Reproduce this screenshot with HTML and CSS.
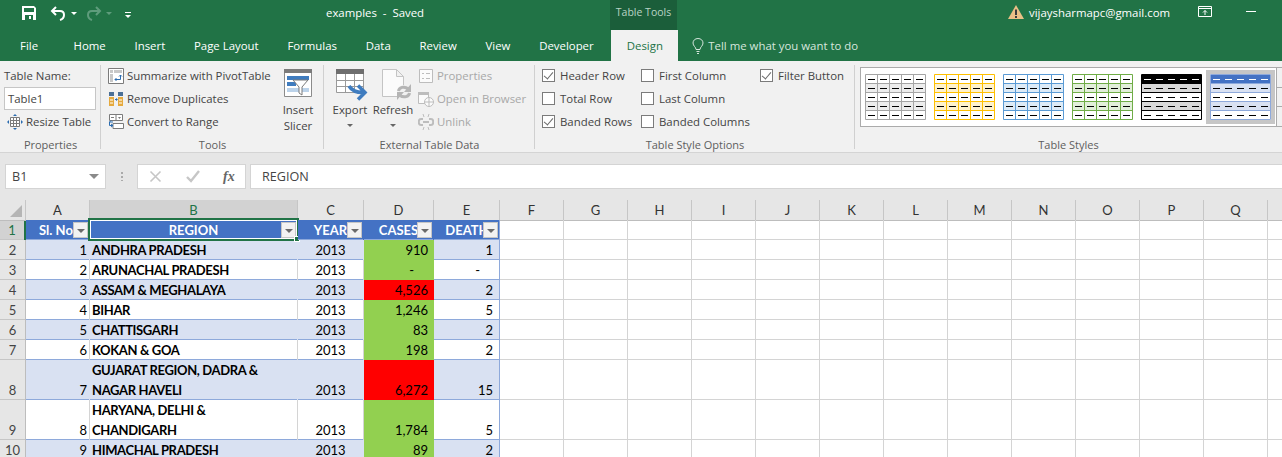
FILE: index.html
```html
<!DOCTYPE html>
<html lang="en">

<head>
    <meta charset="UTF-8">
    <title>examples - Saved</title>
    <link rel="stylesheet" href="styles.css">
</head>

<body>

    <!-- Shared table style preview -->
    <svg class="defs" width="0" height="0">
        <symbol id="thumb" viewBox="0 0 61 46">
            <rect class="t-bg" x="0" y="0" width="61" height="46" />
            <rect class="t-head" x="1" y="1" width="59" height="9" />
            <rect class="t-band" x="1" y="10" width="59" height="9" />
            <rect class="t-band" x="1" y="28" width="59" height="9" />
            <path class="t-vline" d="M12.5 1V45M24.5 1V45M36.5 1V45M48.5 1V45" />
            <path class="t-line" d="M.5 .5H60.5V45.5H.5ZM1 9.5H60M1 18.5H60M1 27.5H60M1 36.5H60" />
            <path class="t-headdash" d="M3 5.500H10M15 5.500H22M27 5.500H34M39 5.500H46M51 5.500H58" />
            <path class="t-dash" d="M3 14.500H10M15 14.500H22M27 14.500H34M39 14.500H46M51 14.500H58M3 23.500H10M15 23.500H22M27 23.500H34M39 23.500H46M51 23.500H58M3 32.500H10M15 32.500H22M27 32.500H34M39 32.500H46M51 32.500H58M3 41.500H10M15 41.500H22M27 41.500H34M39 41.500H46M51 41.500H58" />
        </symbol>
    </svg>

    <!-- Title Bar -->
    <header class="titlebar">
        <div class="qat">
            <svg class="qat-save" width="16" height="16" viewBox="0 0 16 16"><path fill="#fff" fill-rule="evenodd" d="M1 1H13L15 3V15H1ZM3 3V7H13V3ZM4 10V15H12V10ZM8 11H10V14H8Z" /></svg>
            <svg class="qat-undo" width="16" height="16" viewBox="0 0 16 16"><path fill="none" stroke="#fff" stroke-width="2" d="M6 2L2 6L6 10M2 6H10C13 6 14 8 14 10C14 12 13 14 10 15" /></svg>
            <span class="caret caret-white"></span>
            <svg class="qat-redo" width="16" height="16" viewBox="0 0 16 16"><path fill="none" stroke="#5f9c7c" stroke-width="2" d="M10 2L14 6L10 10M14 6H6C3 6 2 8 2 10C2 12 3 14 6 15" /></svg>
            <span class="caret caret-dim"></span>
            <span class="qat-more"></span>
        </div>
        <div class="doc-title">examples&nbsp; -&nbsp; Saved</div>
        <div class="tools-tab">Table Tools</div>
        <div class="account">
            <svg width="16" height="14" viewBox="0 0 16 14"><path fill="#eac086" d="M8 0L16 14H0Z" /><path fill="#3c3c3c" d="M7 4.500H9V10H7ZM7 11H9V13H7Z" /></svg>
            <span>vijaysharmapc@gmail.com</span>
        </div>
        <svg class="win-restore" width="14" height="11" viewBox="0 0 14 11"><path fill="none" stroke="#fff" d="M.5 .5H13.500V10.500H.5ZM.5 2.500H13.500M7 9V4.500M5 6.500L7 4.500L9 6.500" /></svg>
        <span class="win-min"></span>
    </header>

    <!-- Ribbon Tabs -->
    <nav class="tabs">
        <span class="tab tab-file">File</span>
        <span class="tab">Home</span>
        <span class="tab">Insert</span>
        <span class="tab">Page Layout</span>
        <span class="tab">Formulas</span>
        <span class="tab">Data</span>
        <span class="tab">Review</span>
        <span class="tab">View</span>
        <span class="tab">Developer</span>
        <span class="tab tab-active">Design</span>
        <span class="tell-me">
            <svg width="12" height="16" viewBox="0 0 12 16"><path fill="none" stroke="#d6e6dd" d="M4 11.500C4 9 1 8 1 5C1 2.500 3 .5 6 .5C9 .5 11 2.500 11 5C11 8 8 9 8 11.500ZM4.500 13.500H7.500M5 15.500H7" /></svg>
            Tell me what you want to do
        </span>
    </nav>

    <!-- Ribbon -->
    <section class="ribbon">

        <div class="group group-props">
            <div class="group-body props-body">
                <div class="props-label">Table Name:</div>
                <div class="name-input">Table1</div>
                <div class="cmd resize-cmd">
                    <svg width="16" height="16" viewBox="0 0 16 16"><path fill="#fff" stroke="#7b7b7b" d="M3.500 3.500H12.500V12.500H3.500Z" /><path fill="none" stroke="#7b7b7b" d="M6.500 4V12M9.500 4V12M4 6.500H12M4 9.500H12" /><path fill="#2b6cb0" d="M8 0L10 2H6ZM8 16L6 14H10ZM0 8L2 6V10ZM16 8L14 10V6Z" /></svg>
                    <span>Resize Table</span>
                </div>
            </div>
            <div class="group-label">Properties</div>
        </div>

        <div class="group group-tools">
            <div class="group-body tools-body">
                <div class="cmd-list">
                    <div class="cmd">
                        <svg width="16" height="16" viewBox="0 0 16 16"><path fill="#fff" stroke="#7b7b7b" d="M.5 .5H15.500V15.500H.5Z" /><path fill="#c8c8c8" d="M2 2H5V5H2ZM6 2H14V5H6ZM2 6H5V14H2Z" /><path fill="none" stroke="#2b6cb0" d="M12.500 7V11.500H7M11 8.500L12.500 7L14 8.500M8.500 10L7 11.500L8.500 13" /></svg>
                        <span>Summarize with PivotTable</span>
                    </div>
                    <div class="cmd">
                        <svg width="16" height="16" viewBox="0 0 16 16"><path fill="#4a6f96" d="M1 1H6V5H1ZM10 1H15V5H10Z" /><path fill="#e5a93d" d="M1 6H6V15H1ZM10 6H15V15H10Z" /><path fill="none" stroke="#fff" d="M2 9H5M2 12H5M11 9H14M11 12H14" /><path fill="#2b6cb0" d="M7 8H8V7L10 8.500L8 10V9H7Z" /></svg>
                        <span>Remove Duplicates</span>
                    </div>
                    <div class="cmd">
                        <svg width="16" height="16" viewBox="0 0 16 16"><path fill="#fff" stroke="#7b7b7b" d="M1.500 .5H14.500V6.500H1.500ZM8 1V6M5 9.500H15.500V14.500H5Z" /><path fill="#7b7b7b" d="M3 3H6V4H3ZM10 3H13L11.500 5Z" /><path fill="none" stroke="#2b6cb0" d="M5 8H1.500V11.500H5M3 6.500L1.500 8M3 10L5 11.500L3 13" /></svg>
                        <span>Convert to Range</span>
                    </div>
                </div>
                <div class="big-cmd slicer-cmd">
                    <svg width="28" height="28" viewBox="0 0 28 28"><path fill="#fff" stroke="#8b8b8b" d="M.5 .5H27.500V27.500H.5Z" /><path fill="#7b7b7b" d="M0 0H28V4H0Z" /><path fill="#3f7cbf" d="M3 7H25V11H3ZM3 13H12V17H3Z" /><path fill="#bcd3ea" d="M3 19H25V23H3Z" /><path fill="#fff" stroke="#7b7b7b" d="M9 11H24L18 18V26L15 24V18Z" /></svg>
                    <span>Insert</span>
                    <span>Slicer</span>
                </div>
            </div>
            <div class="group-label">Tools</div>
        </div>

        <div class="group group-external">
            <div class="group-body external-body">
                <div class="big-cmd export-cmd">
                    <svg width="32" height="32" viewBox="0 0 32 32"><path fill="#fff" stroke="#9a9a9a" d="M.5 .5H27.500V23.500H.5Z" /><path fill="#6e6e6e" d="M0 0H28V5H0Z" /><path fill="none" stroke="#9a9a9a" d="M9.500 5V24M18.500 5V24M1 11.500H27M1 17.500H27" /><path fill="none" stroke="#3f7cbf" stroke-width="3.500" d="M13 17C16 22 20 23.500 27 23.500M22 16.500L29 23.500L22 30.500" /></svg>
                    <span>Export</span>
                    <span class="caret"></span>
                </div>
                <div class="big-cmd refresh-cmd">
                    <svg width="32" height="32" viewBox="0 0 32 32"><path fill="#fbfbfb" stroke="#c4c4c4" d="M.5 .5H14.500L21.500 7.500V27.500H.5ZM14.500 .5V7.500H21.500" /><circle cx="22" cy="23" r="7" fill="#f1f1f1" /><path fill="none" stroke="#b5b5b5" stroke-width="3" d="M16.500 22C17 18.500 22 16.500 26.500 20M27.500 24C27 27.500 22 29.500 17.500 26" /><path fill="#b5b5b5" d="M29 15V23H22ZM15 31V23H22Z" /></svg>
                    <span>Refresh</span>
                    <span class="caret"></span>
                </div>
                <div class="cmd-list cmd-dim">
                    <div class="cmd">
                        <svg width="16" height="16" viewBox="0 0 16 16"><path fill="#fbfbfb" stroke="#bdbdbd" d="M1.500 1.500H14.500V14.500H1.500Z" /><path fill="none" stroke="#bdbdbd" d="M4 5.500H6M8 5.500H12M4 10.500H6M8 10.500H12" /></svg>
                        <span>Properties</span>
                    </div>
                    <div class="cmd">
                        <svg width="16" height="16" viewBox="0 0 16 16"><path fill="#fbfbfb" stroke="#bdbdbd" d="M.5 1.500H10.500V12.500H.5Z" /><path fill="#bdbdbd" d="M0 1H11V4H0Z" /><circle cx="11" cy="11" r="4.500" fill="#fbfbfb" stroke="#bdbdbd" /><path fill="none" stroke="#bdbdbd" d="M6.500 11H15.500M11 6.500V15.500" /></svg>
                        <span>Open in Browser</span>
                    </div>
                    <div class="cmd">
                        <svg width="16" height="16" viewBox="0 0 16 16"><path fill="none" stroke="#bdbdbd" stroke-width="2" d="M5 5H3C0 5 0 11 3 11H5M11 5H13C16 5 16 11 13 11H11M5 8H11" /><path fill="none" stroke="#bdbdbd" d="M5 0L6 3M11 0L10 3M5 16L6 13M11 16L10 13" /></svg>
                        <span>Unlink</span>
                    </div>
                </div>
            </div>
            <div class="group-label">External Table Data</div>
        </div>

        <div class="group group-options">
            <div class="group-body options-body">
                <div class="check-col col-1">
                    <label class="check is-on"><i></i>Header Row</label>
                    <label class="check"><i></i>Total Row</label>
                    <label class="check is-on"><i></i>Banded Rows</label>
                </div>
                <div class="check-col col-2">
                    <label class="check"><i></i>First Column</label>
                    <label class="check"><i></i>Last Column</label>
                    <label class="check"><i></i>Banded Columns</label>
                </div>
                <div class="check-col col-3">
                    <label class="check is-on"><i></i>Filter Button</label>
                </div>
            </div>
            <div class="group-label">Table Style Options</div>
        </div>

        <div class="group group-styles">
            <div class="group-body styles-body">
                <div class="gallery">
                    <span class="style-item"><svg class="ts-gray" width="61" height="46"><use href="#thumb" /></svg></span>
                    <span class="style-item"><svg class="ts-gold" width="61" height="46"><use href="#thumb" /></svg></span>
                    <span class="style-item"><svg class="ts-blue" width="61" height="46"><use href="#thumb" /></svg></span>
                    <span class="style-item"><svg class="ts-green" width="61" height="46"><use href="#thumb" /></svg></span>
                    <span class="style-item"><svg class="ts-black" width="61" height="46"><use href="#thumb" /></svg></span>
                    <span class="style-item is-selected"><svg class="ts-current" width="61" height="46"><use href="#thumb" /></svg></span>
                    <div class="gallery-scroll">
                        <span></span>
                        <span></span>
                        <span></span>
                    </div>
                </div>
            </div>
            <div class="group-label">Table Styles</div>
        </div>

    </section>

    <!-- Formula Bar -->
    <section class="formula-bar">
        <div class="name-box">B1<span class="caret caret-big"></span></div>
        <div class="fx-dots"></div>
        <div class="fx-buttons">
            <svg width="13" height="13" viewBox="0 0 13 13"><path fill="none" stroke="#c6c6c6" stroke-width="1.600" d="M1.500 1.500L11.500 11.500M11.500 1.500L1.500 11.500" /></svg>
            <svg width="14" height="13" viewBox="0 0 14 13"><path fill="none" stroke="#c6c6c6" stroke-width="2.400" d="M1 7L5 11L13 1" /></svg>
            <span class="fx-label">fx</span>
        </div>
        <div class="formula-input">REGION</div>
    </section>

    <!-- Worksheet -->
    <main class="sheet">
        <div class="row col-head">
            <div class="corner"><span></span></div>
            <div>A</div>
            <div class="is-current">B</div>
            <div>C</div>
            <div>D</div>
            <div>E</div>
            <div class="col-rest">
                <span>F</span><span>G</span><span>H</span><span>I</span><span>J</span><span>K</span>
                <span>L</span><span>M</span><span>N</span><span>O</span><span>P</span><span>Q</span>
            </div>
        </div>

        <div class="row table-head">
            <div class="row-num is-current">1</div>
            <div class="cell">Sl. No.<span class="filter"></span></div>
            <div class="cell cell-region">REGION<span class="filter"></span><span class="selection"></span></div>
            <div class="cell">YEAR<span class="filter"></span></div>
            <div class="cell">CASES<span class="filter"></span></div>
            <div class="cell cell-deaths">DEATHS<span class="filter"></span></div>
            <div class="blank"></div>
        </div>

        <div class="row band">
            <div class="row-num">2</div>
            <div class="cell num">1</div>
            <div class="cell region">ANDHRA PRADESH</div>
            <div class="cell year">2013</div>
            <div class="cell num low">910</div>
            <div class="cell num last">1</div>
            <div class="blank"></div>
        </div>
        <div class="row">
            <div class="row-num">3</div>
            <div class="cell num">2</div>
            <div class="cell region">ARUNACHAL PRADESH</div>
            <div class="cell year">2013</div>
            <div class="cell num dash low">-</div>
            <div class="cell num dash last">-</div>
            <div class="blank"></div>
        </div>
        <div class="row band">
            <div class="row-num">4</div>
            <div class="cell num">3</div>
            <div class="cell region">ASSAM &amp; MEGHALAYA</div>
            <div class="cell year">2013</div>
            <div class="cell num high">4,526</div>
            <div class="cell num last">2</div>
            <div class="blank"></div>
        </div>
        <div class="row">
            <div class="row-num">5</div>
            <div class="cell num">4</div>
            <div class="cell region">BIHAR</div>
            <div class="cell year">2013</div>
            <div class="cell num low">1,246</div>
            <div class="cell num last">5</div>
            <div class="blank"></div>
        </div>
        <div class="row band">
            <div class="row-num">6</div>
            <div class="cell num">5</div>
            <div class="cell region">CHATTISGARH</div>
            <div class="cell year">2013</div>
            <div class="cell num low">83</div>
            <div class="cell num last">2</div>
            <div class="blank"></div>
        </div>
        <div class="row">
            <div class="row-num">7</div>
            <div class="cell num">6</div>
            <div class="cell region">KOKAN &amp; GOA</div>
            <div class="cell year">2013</div>
            <div class="cell num low">198</div>
            <div class="cell num last">2</div>
            <div class="blank"></div>
        </div>
        <div class="row band tall">
            <div class="row-num">8</div>
            <div class="cell num">7</div>
            <div class="cell region"><span>GUJARAT REGION, DADRA &amp;<br>NAGAR HAVELI</span></div>
            <div class="cell year">2013</div>
            <div class="cell num high">6,272</div>
            <div class="cell num last">15</div>
            <div class="blank"></div>
        </div>
        <div class="row tall">
            <div class="row-num">9</div>
            <div class="cell num">8</div>
            <div class="cell region"><span>HARYANA, DELHI &amp;<br>CHANDIGARH</span></div>
            <div class="cell year">2013</div>
            <div class="cell num low">1,784</div>
            <div class="cell num last">5</div>
            <div class="blank"></div>
        </div>
        <div class="row band">
            <div class="row-num">10</div>
            <div class="cell num">9</div>
            <div class="cell region">HIMACHAL PRADESH</div>
            <div class="cell year">2013</div>
            <div class="cell num low">89</div>
            <div class="cell num last">2</div>
            <div class="blank"></div>
        </div>
    </main>

</body>

</html>
```

FILE: styles.css
```css
/* General Styling */
html,
body {
    margin: 0;
    height: 457px;
    overflow: hidden;
}

body {
    font-family: 'Open Sans', sans-serif;
    font-size: 11.4px;
    color: #444444;
    background-color: #ffffff;
}

.defs {
    display: block;
    height: 0;
}

/* Small dropdown arrow */
.caret {
    display: block;
    width: 0;
    height: 0;
    border-left: 3px solid transparent;
    border-right: 3px solid transparent;
    border-top: 3px solid #666666;
}

.caret-white {
    border-top-color: #ffffff;
}

.caret-dim {
    border-top-color: #5f9c7c;
}

.caret-big {
    border-left-width: 5px;
    border-right-width: 5px;
    border-top-width: 5px;
    border-top-color: #8a8a8a;
}

/* Title Bar */
.titlebar {
    height: 30px;
    display: flex;
    align-items: center;
    background-color: #217346;
    color: #ffffff;
}

.qat {
    width: 326px;
    display: flex;
    align-items: center;
    padding-left: 21px;
    margin-bottom: 4px;
    box-sizing: border-box;
}

.qat-undo {
    margin-left: 13px;
}

.qat .caret-white {
    margin-left: 5px;
}

.qat-redo {
    margin-left: 9px;
}

.qat .caret-dim {
    margin-left: 4px;
}

.qat-more {
    width: 6px;
    height: 2px;
    margin-left: 13px;
    border-top: 1px solid #ffffff;
    position: relative;
}

.qat-more::after {
    content: "";
    position: absolute;
    left: 0;
    top: 2px;
    border-left: 3px solid transparent;
    border-right: 3px solid transparent;
    border-top: 3px solid #ffffff;
}

.doc-title {
    width: 284px;
    color: #ffffff;
    margin-bottom: 6px;
}

.tools-tab {
    width: 67px;
    height: 30px;
    line-height: 24px;
    text-align: center;
    font-size: 10.5px;
    color: #b9d3c5;
    background-color: #1b5e3a;
}

.account {
    display: flex;
    align-items: center;
    gap: 5px;
    margin-left: 331px;
    margin-bottom: 6px;
    width: 190px;
    color: #ffffff;
}

.win-restore {
    margin-bottom: 8px;
}

.win-min {
    width: 10px;
    height: 1px;
    margin-left: 34px;
    margin-bottom: 7px;
    background-color: #ffffff;
}

/* Ribbon Tabs */
.tabs {
    height: 31px;
    display: flex;
    align-items: stretch;
    background-color: #217346;
    color: #ffffff;
    padding-left: 6px;
}

.tab {
    padding: 0 14.4px;
    line-height: 31px;
}

.tab-file {
    padding: 0 21.1px 0 14px;
}

.tab-active {
    margin-left: 3.25px;
    width: 67px;
    box-sizing: border-box;
    text-align: center;
    padding: 0;
    background-color: #f1f1f1;
    color: #217346;
}

.tell-me {
    display: flex;
    align-items: center;
    gap: 4px;
    margin-left: 14px;
    color: #d6e6dd;
}

/* Ribbon */
.ribbon {
    height: 91px;
    display: flex;
    background-color: #f1f1f1;
    border-bottom: 1px solid #d4d4d4;
    box-sizing: content-box;
}

.group {
    flex: none;
    display: flex;
    flex-direction: column;
    box-sizing: border-box;
    padding-top: 3px;
    position: relative;
}

.group::after {
    content: "";
    position: absolute;
    right: 0;
    top: 4px;
    bottom: 3px;
    width: 1px;
    background-color: #d0d0d0;
}

.group-styles::after {
    display: none;
}

.group-props {
    width: 101px;
}

.group-tools {
    width: 223px;
}

.group-external {
    width: 211px;
}

.group-options {
    width: 320px;
}

.group-styles {
    width: 427px;
}

.group-body {
    height: 72px;
    display: flex;
}

.group-label {
    height: 15px;
    line-height: 15px;
    margin-top: 2px;
    text-align: center;
    color: #5e5e5e;
    font-size: 11px;
}

/* Small ribbon commands */
.cmd-list {
    display: flex;
    flex-direction: column;
}

.cmd {
    height: 23px;
    display: flex;
    align-items: center;
    gap: 3px;
    white-space: nowrap;
}

.cmd-dim {
    color: #a8a8a8;
}

/* Large ribbon commands */
.big-cmd {
    display: flex;
    flex-direction: column;
    align-items: center;
    line-height: 16px;
}

.big-cmd .caret {
    margin-top: 6px;
}

/* Properties */
.props-body {
    flex-direction: column;
    padding-left: 4px;
}

.props-label {
    height: 23px;
    line-height: 23px;
}

.name-input {
    width: 92px;
    height: 23px;
    box-sizing: border-box;
    line-height: 21px;
    padding-left: 3px;
    background-color: #ffffff;
    border: 1px solid #c6c6c6;
}

.resize-cmd {
    padding-left: 3px;
}

/* Tools */
.tools-body {
    padding-left: 7px;
}

.tools-body .cmd-list {
    width: 164px;
}

.slicer-cmd {
    margin-left: 11px;
    width: 30px;
}

.slicer-cmd svg {
    margin-top: 5px;
    margin-bottom: 5px;
}

/* External Table Data */
.external-body {
    padding-left: 9px;
}

.export-cmd {
    width: 34px;
}

.export-cmd svg {
    align-self: flex-start;
    margin-left: 3px;
    margin-top: 5px;
    margin-bottom: 1px;
}

.refresh-cmd {
    width: 42px;
    margin-left: 5px;
}

.refresh-cmd svg {
    align-self: flex-start;
    margin-left: 10px;
    margin-top: 5px;
    margin-bottom: 1px;
}

.external-body .cmd-list {
    margin-left: 4px;
}

/* Table Style Options */
.options-body {
    padding-left: 7px;
}

.check-col {
    display: flex;
    flex-direction: column;
}

.col-1 {
    width: 99px;
}

.col-2 {
    width: 119px;
}

.check {
    height: 23px;
    display: flex;
    align-items: center;
    gap: 5px;
    white-space: nowrap;
}

.check i {
    width: 11px;
    height: 11px;
    border: 1px solid #7b7b7b;
    background-color: #ffffff;
    position: relative;
}

.is-on i::after {
    content: "";
    position: absolute;
    left: 3px;
    top: 0;
    width: 4px;
    height: 8px;
    border: solid #6a6a6a;
    border-width: 0 1.5px 1.5px 0;
    transform: rotate(40deg);
}

/* Table Styles gallery */
.styles-body {
    padding-left: 5px;
}

.gallery {
    height: 60px;
    margin-top: 3px;
    width: 422px;
    box-sizing: border-box;
    display: flex;
    align-items: center;
    gap: 8px;
    background-color: #ffffff;
    border: 1px solid #ababab;
    border-right: none;
    padding-left: 4px;
}

.style-item {
    display: flex;
}

.style-item.is-selected {
    padding: 4px;
    margin-left: -4px;
    margin-right: -4px;
    background-color: #c6c6c6;
}

.gallery-scroll {
    margin-left: -3px;
    flex: 1;
    align-self: stretch;
    display: flex;
    flex-direction: column;
    border-left: 1px solid #ababab;
}

.gallery-scroll span {
    flex: 1;
    border-bottom: 1px solid #ababab;
    background-color: #f1f1f1;
}

.gallery-scroll span:last-child {
    border-bottom: none;
}

/* Table style preview colours */
.t-bg {
    fill: #ffffff;
}

.t-head {
    fill: var(--head, #ffffff);
}

.t-band {
    fill: var(--band);
}

.t-vline {
    fill: none;
    stroke: var(--vline, none);
}

.t-line {
    fill: none;
    stroke: var(--line);
}

.t-headdash {
    fill: none;
    stroke: var(--headdash, #000000);
}

.t-dash {
    fill: none;
    stroke: #000000;
}

.ts-gray {
    --line: #a5a5a5;
    --vline: #a5a5a5;
    --band: #ededed;
}

.ts-gold {
    --line: #ffc000;
    --vline: #ffc000;
    --band: #fff2cc;
}

.ts-blue {
    --line: #5b9bd5;
    --vline: #5b9bd5;
    --band: #ddebf7;
}

.ts-green {
    --line: #70ad47;
    --vline: #70ad47;
    --band: #e2efda;
}

.ts-black {
    --line: #000000;
    --head: #000000;
    --headdash: #ffffff;
    --band: #d9d9d9;
}

.ts-current {
    --line: #8ea9db;
    --head: #4472c4;
    --headdash: #ffffff;
    --band: #d9e1f2;
}

/* Formula Bar */
.formula-bar {
    height: 47px;
    box-sizing: border-box;
    display: flex;
    align-items: flex-start;
    padding: 11px 0 0 5px;
    background-color: #e6e6e6;
    font-size: 12.6px;
}

.name-box {
    width: 101px;
    height: 25px;
    box-sizing: border-box;
    display: flex;
    align-items: center;
    justify-content: space-between;
    padding: 0 6px 0 6px;
    background-color: #ffffff;
    border: 1px solid #d4d4d4;
}

.fx-dots {
    width: 2px;
    height: 10px;
    margin: 7px 14px 0 15px;
    background-image: radial-gradient(circle, #aaaaaa 1px, transparent 1px);
    background-size: 2px 4px;
}

.fx-buttons {
    width: 109px;
    height: 25px;
    box-sizing: border-box;
    display: flex;
    align-items: center;
    gap: 24px;
    padding-left: 11px;
    background-color: #ffffff;
    border: 1px solid #d4d4d4;
}

.fx-label {
    font-family: 'Liberation Serif', serif;
    font-style: italic;
    font-weight: bold;
    font-size: 14px;
    color: #666666;
    margin-left: -1px;
}

.formula-input {
    flex: 1;
    height: 25px;
    line-height: 24px;
    box-sizing: border-box;
    margin-left: 4px;
    padding-left: 11px;
    background-color: #ffffff;
    border: 1px solid #d4d4d4;
    border-right: none;
}

/* Worksheet */
.sheet {
    font-family: 'Lato', sans-serif;
    font-size: 13px;
    color: #000000;
    background-color: #ffffff;
}

.row {
    height: 20px;
    display: grid;
    grid-template-columns: 26px 64px 208px 66px 70px 66px 1fr;
}

.row.tall {
    height: 40px;
}

/* Column headers */
.col-head {
    background-color: #e6e6e6;
    color: #333333;
    font-size: 13px;
    line-height: 20px;
    text-align: center;
}

.col-head>div {
    border-right: 1px solid #c6c6c6;
    border-bottom: 1px solid #bdbdbd;
    box-sizing: border-box;
}

.col-head .is-current {
    background-color: #d2d2d2;
    color: #217346;
}

.corner {
    position: relative;
}

.corner span {
    position: absolute;
    right: 3px;
    bottom: 3px;
    width: 0;
    height: 0;
    border-left: 12px solid transparent;
    border-bottom: 12px solid #b5b5b5;
}

.col-rest {
    display: grid;
    grid-template-columns: repeat(12, 64px);
    border-right: none !important;
}

.col-rest span {
    border-right: 1px solid #c6c6c6;
}

/* Row numbers */
.row-num {
    box-sizing: border-box;
    background-color: #e6e6e6;
    color: #444444;
    text-align: center;
    border-right: 1px solid #bdbdbd;
    box-shadow: inset 0 -1px 0 #c6c6c6;
    font-size: 13px;
    display: flex;
    align-items: flex-end;
    justify-content: center;
    line-height: 20px;
}

.row-num.is-current {
    background-color: #d2d2d2;
    color: #217346;
    border-right: 2px solid #217346;
}

/* Cells */
.cell {
    box-sizing: border-box;
    background-color: #ffffff;
    box-shadow: inset 0 -1px 0 #8ea9db;
    border-right: 1px solid #d4d4d4;
    line-height: 20px;
    padding: 0 2px;
    display: flex;
    align-items: flex-end;
    white-space: nowrap;
    overflow: hidden;
}

.band .cell {
    background-color: #d9e1f2;
    border-right-color: #d9e1f2;
}

.num {
    justify-content: flex-end;
}

.region {
    font-weight: bold;
    letter-spacing: -0.35px;
}

.year {
    justify-content: center;
}

.row .low {
    background-color: #92d050;
    border-right-color: #92d050;
    box-shadow: none;
    padding-right: 5px;
}

.row .high {
    background-color: #ff0000;
    border-right-color: #ff0000;
    box-shadow: none;
    padding-right: 5px;
}

.row .last {
    border-right-color: #8ea9db;
    padding-right: 6px;
}

/* Accounting dash sits in from the right edge */
.row .dash {
    padding-right: 19px;
}

.blank {
    border-bottom: 1px solid #d4d4d4;
    background-image: repeating-linear-gradient(to right, transparent 0, transparent 63px, #d4d4d4 63px, #d4d4d4 64px);
}

/* Table header row */
.table-head .cell {
    position: relative;
    background-color: #4472c4;
    border-right-color: #4472c4;
    color: #ffffff;
    font-weight: bold;
    justify-content: center;
}

.table-head .cell-deaths {
    padding-left: 10px;
    border-right-color: #8ea9db;
}

.filter {
    position: absolute;
    right: 1px;
    top: 2px;
    width: 15px;
    height: 16px;
    box-sizing: border-box;
    background-color: #f2f2f2;
    border: 1px solid #c6c6c6;
}

.filter::after {
    content: "";
    position: absolute;
    left: 3px;
    top: 6px;
    border-left: 4px solid transparent;
    border-right: 4px solid transparent;
    border-top: 4px solid #6a6a6a;
}

.table-head .cell-region {
    overflow: visible;
}

.selection {
    position: absolute;
    left: -2px;
    top: -2px;
    right: -2px;
    bottom: -1px;
    border: 2px solid #217346;
    box-shadow: inset 0 0 0 1px #ffffff;
    pointer-events: none;
}

.selection::after {
    content: "";
    position: absolute;
    right: -3px;
    bottom: -3px;
    width: 6px;
    height: 6px;
    box-sizing: border-box;
    background-color: #217346;
    border: 1px solid #ffffff;
}
```
